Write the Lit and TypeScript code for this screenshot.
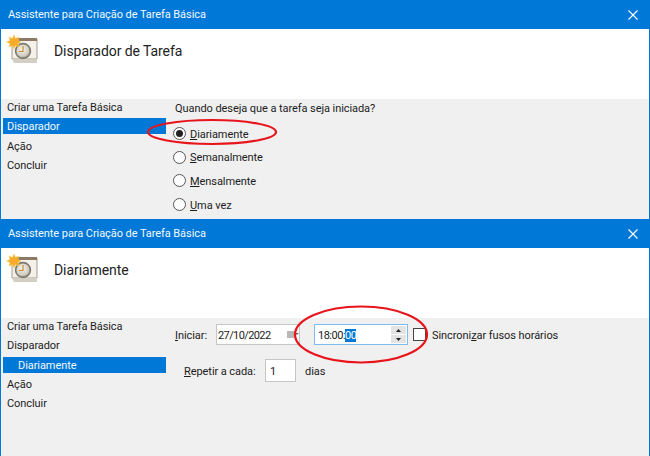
import { LitElement, html, css } from "lit";
import { customElement } from "lit/decorators.js";

const icon = html`<svg class="icon" width="32" height="30" viewBox="0 0 32 30">
  <defs><radialGradient id="f" cx="0.45" cy="0.4" r="0.6"><stop offset="0" stop-color="#f6f6f2"/><stop offset="0.75" stop-color="#cfcbbf"/><stop offset="1" stop-color="#8f8a7c"/></radialGradient></defs>
  <path d="M6 4H31V24H6Z" fill="#f4f1ea" stroke="#a59c8d" stroke-width="1"/>
  <path d="M10 3H31V6H10Z" fill="#8d7a66"/>
  <path d="M6 24H31V28H8Z" fill="#d3cfc5"/>
  <circle cx="17" cy="16" r="7.4" fill="url(#f)" stroke="#7d7a70" stroke-width="1.6"/>
  <path d="M17 11V16.5H13" fill="none" stroke="#c98b2a" stroke-width="1.2"/>
  <path d="M8 0 9.5 3.5 13 2 12 5.5 15 7 12 8.5 13 12 9.5 10.5 8 14 6.5 10.5 3 12 4 8.5 .5 7 4 5.5 3 2 6.5 3.5Z" fill="#f9aa2a" stroke="#f5d34e" stroke-width=".5"/>
</svg>`;

const closeIcon = html`<svg class="close" width="10" height="10" viewBox="0 0 10 10"><path d="M.5.5 9.5 9.5M9.5.5.5 9.5" stroke="#fff" stroke-width="1.1" fill="none"/></svg>`;

@customElement("app-root")
export class AppRoot extends LitElement {
  static styles = css`
    :host { display: block; width: 650px; height: 456px; position: relative; overflow: hidden;
      font-family: Roboto, sans-serif; font-size: 11px; letter-spacing: -0.07px; color: #1c1c1c; background: #f0f0f0; }
    .win { display: flex; flex-direction: column; border-left: 1px solid #0078d7; border-right: 1px solid #0078d7; box-sizing: border-box; }
    .w1 { height: 219px; }
    .w2 { height: 237px; }
    .bar { flex: none; height: 29px; background: #0078d7; color: #f4f9fd; display: flex; align-items: center; justify-content: space-between; padding: 0 11px 0 7px; box-sizing: border-box; }
    .head { flex: none; height: 70px; background: #fff; display: flex; align-items: flex-start; padding: 6px 0 0 5px; box-sizing: border-box; }
    .head h1 { margin: 6px 0 0 16px; font-weight: 400; font-size: 14px; line-height: 20px; color: #222; }
    .body { flex: 1; display: flex; background: #f0f0f0; min-height: 0; }
    .nav { flex: none; width: 165px; padding-left: 2px; box-sizing: border-box; display: flex; flex-direction: column; gap: 3.3px; }
    .nav div { height: 16px; flex: none; line-height: 17px; padding-left: 4px; }
    .nav .sel { background: #0078d7; color: #f4f9fd; }
    .nav .sub { padding-left: 15px; }
    u { text-underline-offset: 1px; }
    .q { padding: 3px 0 0 9px; }
    .q p { margin: 0 0 6px; line-height: 14px; }
    .radio { display: flex; align-items: center; gap: 4px; height: 23.6px; margin-left: -2px; }
    .radio .txt { padding-top: 1px; }
    .dot { width: 13px; height: 13px; box-sizing: border-box; border: 1.3px solid #555; border-radius: 50%; background: #fff; display: grid; place-items: center; }
    .dot i { width: 7px; height: 7px; border-radius: 50%; background: #222; }
    .form { padding: 6px 0 0 9px; display: flex; flex-direction: column; gap: 14px; }
    .line { display: flex; align-items: center; }
    .line > .txt { padding-top: 1px; }
    .rep { padding-left: 9px; }
    .start { width: 41px; }
    .every { width: 81px; }
    .box { background: #fff; border: 1px solid #c6c6c6; box-sizing: border-box; display: flex; align-items: center; height: 21px; padding: 1px 0 0 1px; }
    .date { width: 84px; position: relative; letter-spacing: -0.6px; }
    .cal { position: absolute; left: 70px; top: 6px; width: 7px; height: 7px; background: #b8b8b8; }
    .cal::after { content: ""; position: absolute; left: 8px; top: 2px; border: 2px solid transparent; border-top-color: #666; }
    .time { width: 94px; margin-left: 14px; border-color: #7ebcf0; justify-content: space-between; padding: 1px 1px 0 3px; letter-spacing: -0.5px; }
    .sel-t { background: #0078d7; color: #fff; }
    .spin { display: flex; flex-direction: column; width: 15px; gap: 1px; margin-top: -1px; }
    .spin span { height: 8px; background: #e4e4e4; display: grid; place-items: center; }
    .chk { width: 13px; height: 13px; margin: 0 6px 0 5px; border: 1.3px solid #444; background: #fff; box-sizing: border-box; }
    .num { width: 31px; height: 23px; margin-right: 9px; padding-left: 4px; }
    .marks { position: absolute; left: 0; top: 0; pointer-events: none; }
  `;
  render() {
    const bar = html`<div class="bar"><span>Assistente para Criação de Tarefa Básica</span>${closeIcon}</div>`;
    return html`
      <div class="win w1">
        ${bar}
        <div class="head">${icon}<h1>Disparador de Tarefa</h1></div>
        <div class="body">
          <div class="nav"><div>Criar uma Tarefa Básica</div><div class="sel">Disparador</div><div>Ação</div><div>Concluir</div></div>
          <div class="q">
            <p>Quando deseja que a tarefa seja iniciada?</p>
            <div class="radio"><span class="dot"><i></i></span><span class="txt"><u>D</u>iariamente</span></div>
            <div class="radio"><span class="dot"></span><span class="txt"><u>S</u>emanalmente</span></div>
            <div class="radio"><span class="dot"></span><span class="txt"><u>M</u>ensalmente</span></div>
            <div class="radio"><span class="dot"></span><span class="txt"><u>U</u>ma vez</span></div>
          </div>
        </div>
      </div>
      <div class="win w2">
        ${bar}
        <div class="head">${icon}<h1>Diariamente</h1></div>
        <div class="body">
          <div class="nav"><div>Criar uma Tarefa Básica</div><div>Disparador</div><div class="sel sub">Diariamente</div><div>Ação</div><div>Concluir</div></div>
          <div class="form">
            <div class="line"><span class="start txt"><u>I</u>niciar:</span>
              <div class="box date">27/10/2022<span class="cal"></span></div>
              <div class="box time"><span>18:00:<span class="sel-t">00</span></span>
                <span class="spin"><span><svg width="5" height="3" viewBox="0 0 5 3"><path d="M2.5 0 5 3H0Z" fill="#222"/></svg></span><span><svg width="5" height="3" viewBox="0 0 5 3"><path d="M0 0H5L2.5 3Z" fill="#222"/></svg></span></span>
              </div>
              <span class="chk"></span><span class="txt">Sincroni<u>z</u>ar fusos horários</span>
            </div>
            <div class="line rep"><span class="every txt"><u>R</u>epetir a cada:</span><div class="box num">1</div><span class="txt">dias</span></div>
          </div>
        </div>
      </div>
      <svg class="marks" width="650" height="456" viewBox="0 0 650 456" fill="none" stroke="#e8141c" stroke-width="2.2">
        <ellipse cx="212" cy="132" rx="64" ry="12"/>
        <ellipse cx="361" cy="334.5" rx="66" ry="28"/>
      </svg>
    `;
  }
}
